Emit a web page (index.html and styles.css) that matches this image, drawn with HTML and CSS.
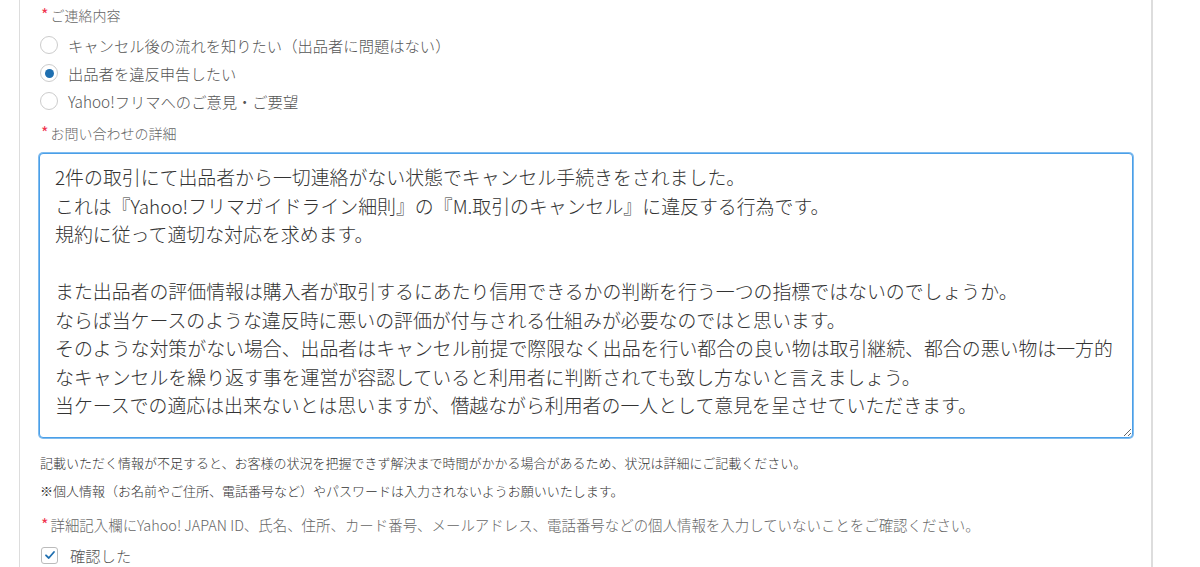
FILE: index.html
```
<!DOCTYPE html>
<html lang="ja">
<head>
    <meta charset="UTF-8">
    <meta name="viewport" content="width=device-width, initial-scale=1.0">
    <title>お問い合わせフォーム</title>
    <link rel="stylesheet" href="styles.css">
</head>
<body>
    <div class="panel">

        <div class="field-label"><span class="req">*</span>ご連絡内容</div>

        <div class="radio-list">
            <label class="radio-row">
                <input type="radio" name="kind">
                <span>キャンセル後の流れを知りたい（出品者に問題はない）</span>
            </label>
            <label class="radio-row">
                <input type="radio" name="kind" checked>
                <span>出品者を違反申告したい</span>
            </label>
            <label class="radio-row">
                <input type="radio" name="kind">
                <span>Yahoo!フリマへのご意見・ご要望</span>
            </label>
        </div>

        <div class="field-label second"><span class="req">*</span>お問い合わせの詳細</div>

        <textarea class="detail" spellcheck="false">2件の取引にて出品者から一切連絡がない状態でキャンセル手続きをされました。
これは『Yahoo!フリマガイドライン細則』の『M.取引のキャンセル』に違反する行為です。
規約に従って適切な対応を求めます。

また出品者の評価情報は購入者が取引するにあたり信用できるかの判断を行う一つの指標ではないのでしょうか。
ならば当ケースのような違反時に悪いの評価が付与される仕組みが必要なのではと思います。
そのような対策がない場合、出品者はキャンセル前提で際限なく出品を行い都合の良い物は取引継続、都合の悪い物は一方的
なキャンセルを繰り返す事を運営が容認していると利用者に判断されても致し方ないと言えましょう。
当ケースでの適応は出来ないとは思いますが、僭越ながら利用者の一人として意見を呈させていただきます。</textarea>

        <p class="note first">記載いただく情報が不足すると、お客様の状況を把握できず解決まで時間がかかる場合があるため、状況は詳細にご記載ください。</p>
        <p class="note">※個人情報（お名前やご住所、電話番号など）やパスワードは入力されないようお願いいたします。</p>

        <div class="field-label third"><span class="req">*</span>詳細記入欄にYahoo! JAPAN ID、氏名、住所、カード番号、メールアドレス、電話番号などの個人情報を入力していないことをご確認ください。</div>

        <label class="check-row">
            <span class="check-box">
                <svg width="12" height="12" viewBox="0 0 12 12"><path d="M2 6.3 L4.8 9 L10 3" fill="none" stroke="#1f6fb0" stroke-width="1.8" stroke-linecap="round" stroke-linejoin="round"/></svg>
            </span>
            <span>確認した</span>
        </label>

    </div>
</body>
</html>
```

FILE: styles.css
```
body {
    margin: 0;
    background: #fff;
    font-family: "Noto Sans CJK JP", "Noto Sans", sans-serif;
    font-weight: 300;
    color: #555;
}

.panel {
    margin-left: 19px;
    width: 1134px;
    height: 567px;
    box-sizing: border-box;
    border-left: 1px solid #ddd;
    border-right: 2px solid #ddd;
    padding: 5px 19px 0 19px;
    overflow: hidden;
}

.field-label {
    height: 20px;
    font-size: 14px;
    line-height: 20px;
    color: #666;
    padding-left: 2px;
}

.field-label.second {
    margin-top: 8px;
}

.field-label.third {
    margin-top: 14px;
    font-size: 14.45px;
}

/* required mark */
.req {
    color: #f0344f;
    font-size: 16px;
    font-weight: 400;
    line-height: 0;
    margin-right: 2px;
}

.radio-list {
    margin-top: 6px;
}

.radio-row {
    display: flex;
    align-items: center;
    height: 28px;
    font-size: 15.3px;
    color: #555;
}

.radio-row input {
    appearance: none;
    -webkit-appearance: none;
    width: 18px;
    height: 18px;
    margin: 0 10px 0 1px;
    border: 1px solid #ccc;
    border-radius: 50%;
    background: #fff;
    display: flex;
    align-items: center;
    justify-content: center;
}

.radio-row input:checked::after {
    content: "";
    width: 9px;
    height: 9px;
    border-radius: 50%;
    background: #1f6fb0;
}

.detail {
    display: block;
    width: 1094px;
    height: 285px;
    margin: 10px 0 0 0;
    box-sizing: border-box;
    padding: 9px 15px;
    border: 1px solid #4a9fe8;
    box-shadow: 0 0 0 1px rgba(74, 159, 232, 0.7);
    border-radius: 4px;
    outline: none;
    font-family: "Noto Sans CJK JP", "Noto Sans", sans-serif;
    font-weight: 300;
    font-size: 18.9px;
    line-height: 28.5px;
    color: #333;
    white-space: pre;
    overflow: hidden;
    resize: both;
}

.note {
    margin: 8px 0 0 1px;
    font-size: 13px;
    line-height: 20px;
    color: #333;
}

.note.first {
    margin-top: 15px;
}

.check-row {
    display: flex;
    align-items: center;
    height: 28px;
    margin-top: 6px;
    font-size: 15.3px;
    color: #555;
}

.check-box {
    width: 15px;
    height: 15px;
    margin: 0 12px 0 2px;
    border: 1px solid #bbb;
    border-radius: 3px;
    display: flex;
    align-items: center;
    justify-content: center;
}
```
